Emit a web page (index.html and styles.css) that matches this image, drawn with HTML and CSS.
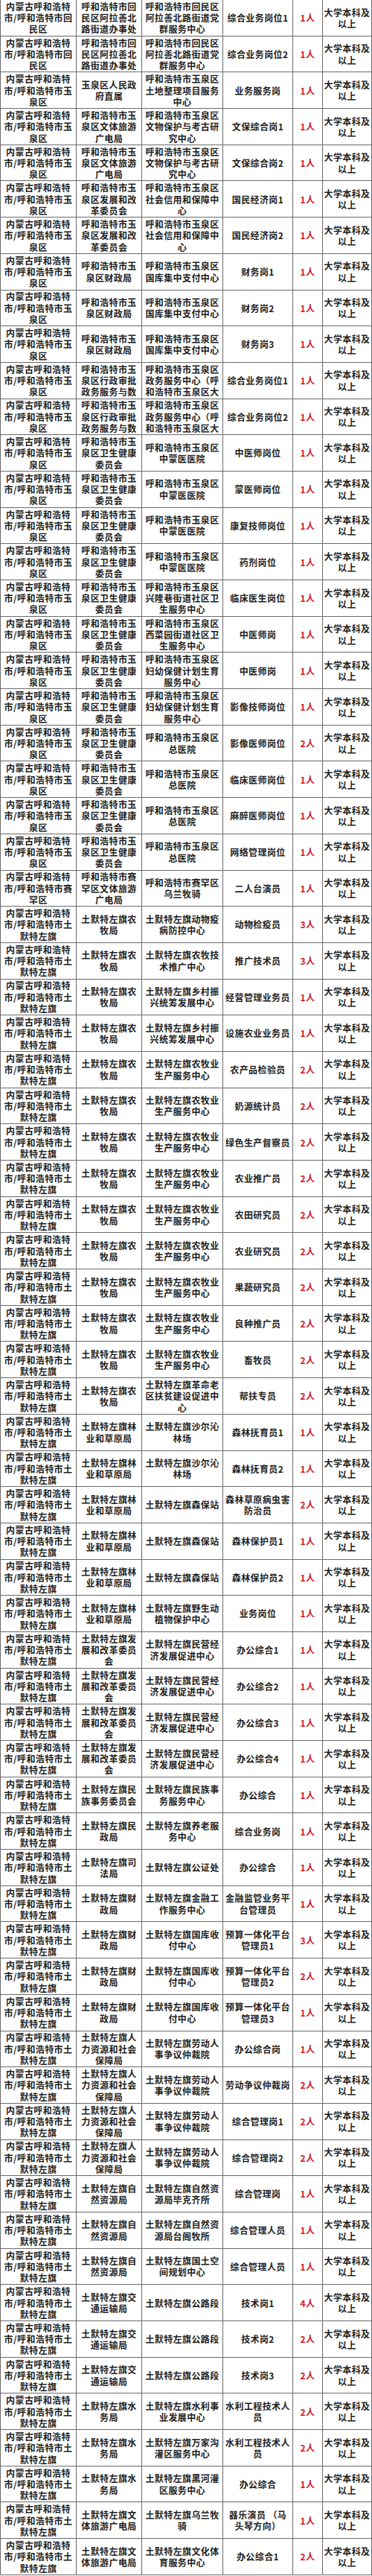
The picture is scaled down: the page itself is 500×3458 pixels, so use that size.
FILE: index.html
```html
<!DOCTYPE html>
<html lang="zh-CN">
<head>
<meta charset="utf-8">
<title>岗位表</title>
<link rel="stylesheet" href="styles.css">
</head>
<body>
<div class="sheet">
<div class="row"><div class="cell"><span>内蒙古呼和浩特市/呼和浩特市回民区</span></div><div class="cell"><span>呼和浩特市回民区阿拉善北路街道办事处</span></div><div class="cell"><span>呼和浩特市回民区阿拉善北路街道党群服务中心</span></div><div class="cell"><span>综合业务岗位1</span></div><div class="cell num"><span>1人</span></div><div class="cell"><span>大学本科及以上</span></div></div>
<div class="row"><div class="cell"><span>内蒙古呼和浩特市/呼和浩特市回民区</span></div><div class="cell"><span>呼和浩特市回民区阿拉善北路街道办事处</span></div><div class="cell"><span>呼和浩特市回民区阿拉善北路街道党群服务中心</span></div><div class="cell"><span>综合业务岗位2</span></div><div class="cell num"><span>1人</span></div><div class="cell"><span>大学本科及以上</span></div></div>
<div class="row"><div class="cell"><span>内蒙古呼和浩特市/呼和浩特市玉泉区</span></div><div class="cell"><span>玉泉区人民政府直属</span></div><div class="cell"><span>呼和浩特市玉泉区土地整理项目服务中心</span></div><div class="cell"><span>业务服务岗</span></div><div class="cell num"><span>1人</span></div><div class="cell"><span>大学本科及以上</span></div></div>
<div class="row"><div class="cell"><span>内蒙古呼和浩特市/呼和浩特市玉泉区</span></div><div class="cell"><span>呼和浩特市玉泉区文体旅游广电局</span></div><div class="cell"><span>呼和浩特市玉泉区文物保护与考古研究中心</span></div><div class="cell"><span>文保综合岗1</span></div><div class="cell num"><span>1人</span></div><div class="cell"><span>大学本科及以上</span></div></div>
<div class="row"><div class="cell"><span>内蒙古呼和浩特市/呼和浩特市玉泉区</span></div><div class="cell"><span>呼和浩特市玉泉区文体旅游广电局</span></div><div class="cell"><span>呼和浩特市玉泉区文物保护与考古研究中心</span></div><div class="cell"><span>文保综合岗2</span></div><div class="cell num"><span>1人</span></div><div class="cell"><span>大学本科及以上</span></div></div>
<div class="row"><div class="cell"><span>内蒙古呼和浩特市/呼和浩特市玉泉区</span></div><div class="cell"><span>呼和浩特市玉泉区发展和改革委员会</span></div><div class="cell"><span>呼和浩特市玉泉区社会信用和保障中心</span></div><div class="cell"><span>国民经济岗1</span></div><div class="cell num"><span>1人</span></div><div class="cell"><span>大学本科及以上</span></div></div>
<div class="row"><div class="cell"><span>内蒙古呼和浩特市/呼和浩特市玉泉区</span></div><div class="cell"><span>呼和浩特市玉泉区发展和改革委员会</span></div><div class="cell"><span>呼和浩特市玉泉区社会信用和保障中心</span></div><div class="cell"><span>国民经济岗2</span></div><div class="cell num"><span>1人</span></div><div class="cell"><span>大学本科及以上</span></div></div>
<div class="row"><div class="cell"><span>内蒙古呼和浩特市/呼和浩特市玉泉区</span></div><div class="cell"><span>呼和浩特市玉泉区财政局</span></div><div class="cell"><span>呼和浩特市玉泉区国库集中支付中心</span></div><div class="cell"><span>财务岗1</span></div><div class="cell num"><span>1人</span></div><div class="cell"><span>大学本科及以上</span></div></div>
<div class="row"><div class="cell"><span>内蒙古呼和浩特市/呼和浩特市玉泉区</span></div><div class="cell"><span>呼和浩特市玉泉区财政局</span></div><div class="cell"><span>呼和浩特市玉泉区国库集中支付中心</span></div><div class="cell"><span>财务岗2</span></div><div class="cell num"><span>1人</span></div><div class="cell"><span>大学本科及以上</span></div></div>
<div class="row"><div class="cell"><span>内蒙古呼和浩特市/呼和浩特市玉泉区</span></div><div class="cell"><span>呼和浩特市玉泉区财政局</span></div><div class="cell"><span>呼和浩特市玉泉区国库集中支付中心</span></div><div class="cell"><span>财务岗3</span></div><div class="cell num"><span>1人</span></div><div class="cell"><span>大学本科及以上</span></div></div>
<div class="row"><div class="cell"><span>内蒙古呼和浩特市/呼和浩特市玉泉区</span></div><div class="cell"><span>呼和浩特市玉泉区行政审批政务服务与数</span></div><div class="cell"><span>呼和浩特市玉泉区政务服务中心（呼和浩特市玉泉区大</span></div><div class="cell"><span>综合业务岗位1</span></div><div class="cell num"><span>1人</span></div><div class="cell"><span>大学本科及以上</span></div></div>
<div class="row"><div class="cell"><span>内蒙古呼和浩特市/呼和浩特市玉泉区</span></div><div class="cell"><span>呼和浩特市玉泉区行政审批政务服务与数</span></div><div class="cell"><span>呼和浩特市玉泉区政务服务中心（呼和浩特市玉泉区大</span></div><div class="cell"><span>综合业务岗位2</span></div><div class="cell num"><span>1人</span></div><div class="cell"><span>大学本科及以上</span></div></div>
<div class="row"><div class="cell"><span>内蒙古呼和浩特市/呼和浩特市玉泉区</span></div><div class="cell"><span>呼和浩特市玉泉区卫生健康委员会</span></div><div class="cell"><span>呼和浩特市玉泉区中蒙医医院</span></div><div class="cell"><span>中医师岗位</span></div><div class="cell num"><span>1人</span></div><div class="cell"><span>大学本科及以上</span></div></div>
<div class="row"><div class="cell"><span>内蒙古呼和浩特市/呼和浩特市玉泉区</span></div><div class="cell"><span>呼和浩特市玉泉区卫生健康委员会</span></div><div class="cell"><span>呼和浩特市玉泉区中蒙医医院</span></div><div class="cell"><span>蒙医师岗位</span></div><div class="cell num"><span>1人</span></div><div class="cell"><span>大学本科及以上</span></div></div>
<div class="row"><div class="cell"><span>内蒙古呼和浩特市/呼和浩特市玉泉区</span></div><div class="cell"><span>呼和浩特市玉泉区卫生健康委员会</span></div><div class="cell"><span>呼和浩特市玉泉区中蒙医医院</span></div><div class="cell"><span>康复技师岗位</span></div><div class="cell num"><span>1人</span></div><div class="cell"><span>大学本科及以上</span></div></div>
<div class="row"><div class="cell"><span>内蒙古呼和浩特市/呼和浩特市玉泉区</span></div><div class="cell"><span>呼和浩特市玉泉区卫生健康委员会</span></div><div class="cell"><span>呼和浩特市玉泉区中蒙医医院</span></div><div class="cell"><span>药剂岗位</span></div><div class="cell num"><span>1人</span></div><div class="cell"><span>大学本科及以上</span></div></div>
<div class="row"><div class="cell"><span>内蒙古呼和浩特市/呼和浩特市玉泉区</span></div><div class="cell"><span>呼和浩特市玉泉区卫生健康委员会</span></div><div class="cell"><span>呼和浩特市玉泉区兴隆巷街道社区卫生服务中心</span></div><div class="cell"><span>临床医生岗位</span></div><div class="cell num"><span>1人</span></div><div class="cell"><span>大学本科及以上</span></div></div>
<div class="row"><div class="cell"><span>内蒙古呼和浩特市/呼和浩特市玉泉区</span></div><div class="cell"><span>呼和浩特市玉泉区卫生健康委员会</span></div><div class="cell"><span>呼和浩特市玉泉区西菜园街道社区卫生服务中心</span></div><div class="cell"><span>中医师岗</span></div><div class="cell num"><span>1人</span></div><div class="cell"><span>大学本科及以上</span></div></div>
<div class="row"><div class="cell"><span>内蒙古呼和浩特市/呼和浩特市玉泉区</span></div><div class="cell"><span>呼和浩特市玉泉区卫生健康委员会</span></div><div class="cell"><span>呼和浩特市玉泉区妇幼保健计划生育服务中心</span></div><div class="cell"><span>中医师岗</span></div><div class="cell num"><span>1人</span></div><div class="cell"><span>大学本科及以上</span></div></div>
<div class="row"><div class="cell"><span>内蒙古呼和浩特市/呼和浩特市玉泉区</span></div><div class="cell"><span>呼和浩特市玉泉区卫生健康委员会</span></div><div class="cell"><span>呼和浩特市玉泉区妇幼保健计划生育服务中心</span></div><div class="cell"><span>影像技师岗位</span></div><div class="cell num"><span>1人</span></div><div class="cell"><span>大学本科及以上</span></div></div>
<div class="row"><div class="cell"><span>内蒙古呼和浩特市/呼和浩特市玉泉区</span></div><div class="cell"><span>呼和浩特市玉泉区卫生健康委员会</span></div><div class="cell"><span>呼和浩特市玉泉区总医院</span></div><div class="cell"><span>影像医师岗位</span></div><div class="cell num"><span>2人</span></div><div class="cell"><span>大学本科及以上</span></div></div>
<div class="row"><div class="cell"><span>内蒙古呼和浩特市/呼和浩特市玉泉区</span></div><div class="cell"><span>呼和浩特市玉泉区卫生健康委员会</span></div><div class="cell"><span>呼和浩特市玉泉区总医院</span></div><div class="cell"><span>临床医师岗位</span></div><div class="cell num"><span>1人</span></div><div class="cell"><span>大学本科及以上</span></div></div>
<div class="row"><div class="cell"><span>内蒙古呼和浩特市/呼和浩特市玉泉区</span></div><div class="cell"><span>呼和浩特市玉泉区卫生健康委员会</span></div><div class="cell"><span>呼和浩特市玉泉区总医院</span></div><div class="cell"><span>麻醉医师岗位</span></div><div class="cell num"><span>1人</span></div><div class="cell"><span>大学本科及以上</span></div></div>
<div class="row"><div class="cell"><span>内蒙古呼和浩特市/呼和浩特市玉泉区</span></div><div class="cell"><span>呼和浩特市玉泉区卫生健康委员会</span></div><div class="cell"><span>呼和浩特市玉泉区总医院</span></div><div class="cell"><span>网络管理岗位</span></div><div class="cell num"><span>1人</span></div><div class="cell"><span>大学本科及以上</span></div></div>
<div class="row"><div class="cell"><span>内蒙古呼和浩特市/呼和浩特市赛罕区</span></div><div class="cell"><span>呼和浩特市赛罕区文体旅游广电局</span></div><div class="cell"><span>呼和浩特市赛罕区乌兰牧骑</span></div><div class="cell"><span>二人台演员</span></div><div class="cell num"><span>1人</span></div><div class="cell"><span>大学本科及以上</span></div></div>
<div class="row"><div class="cell"><span>内蒙古呼和浩特市/呼和浩特市土默特左旗</span></div><div class="cell"><span>土默特左旗农牧局</span></div><div class="cell"><span>土默特左旗动物疫病防控中心</span></div><div class="cell"><span>动物检疫员</span></div><div class="cell num"><span>3人</span></div><div class="cell"><span>大学本科及以上</span></div></div>
<div class="row"><div class="cell"><span>内蒙古呼和浩特市/呼和浩特市土默特左旗</span></div><div class="cell"><span>土默特左旗农牧局</span></div><div class="cell"><span>土默特左旗农牧技术推广中心</span></div><div class="cell"><span>推广技术员</span></div><div class="cell num"><span>3人</span></div><div class="cell"><span>大学本科及以上</span></div></div>
<div class="row"><div class="cell"><span>内蒙古呼和浩特市/呼和浩特市土默特左旗</span></div><div class="cell"><span>土默特左旗农牧局</span></div><div class="cell"><span>土默特左旗乡村振兴统筹发展中心</span></div><div class="cell"><span>经营管理业务员</span></div><div class="cell num"><span>1人</span></div><div class="cell"><span>大学本科及以上</span></div></div>
<div class="row"><div class="cell"><span>内蒙古呼和浩特市/呼和浩特市土默特左旗</span></div><div class="cell"><span>土默特左旗农牧局</span></div><div class="cell"><span>土默特左旗乡村振兴统筹发展中心</span></div><div class="cell"><span>设施农业业务员</span></div><div class="cell num"><span>1人</span></div><div class="cell"><span>大学本科及以上</span></div></div>
<div class="row"><div class="cell"><span>内蒙古呼和浩特市/呼和浩特市土默特左旗</span></div><div class="cell"><span>土默特左旗农牧局</span></div><div class="cell"><span>土默特左旗农牧业生产服务中心</span></div><div class="cell"><span>农产品检验员</span></div><div class="cell num"><span>2人</span></div><div class="cell"><span>大学本科及以上</span></div></div>
<div class="row"><div class="cell"><span>内蒙古呼和浩特市/呼和浩特市土默特左旗</span></div><div class="cell"><span>土默特左旗农牧局</span></div><div class="cell"><span>土默特左旗农牧业生产服务中心</span></div><div class="cell"><span>奶源统计员</span></div><div class="cell num"><span>2人</span></div><div class="cell"><span>大学本科及以上</span></div></div>
<div class="row"><div class="cell"><span>内蒙古呼和浩特市/呼和浩特市土默特左旗</span></div><div class="cell"><span>土默特左旗农牧局</span></div><div class="cell"><span>土默特左旗农牧业生产服务中心</span></div><div class="cell"><span>绿色生产督察员</span></div><div class="cell num"><span>2人</span></div><div class="cell"><span>大学本科及以上</span></div></div>
<div class="row"><div class="cell"><span>内蒙古呼和浩特市/呼和浩特市土默特左旗</span></div><div class="cell"><span>土默特左旗农牧局</span></div><div class="cell"><span>土默特左旗农牧业生产服务中心</span></div><div class="cell"><span>农业推广员</span></div><div class="cell num"><span>2人</span></div><div class="cell"><span>大学本科及以上</span></div></div>
<div class="row"><div class="cell"><span>内蒙古呼和浩特市/呼和浩特市土默特左旗</span></div><div class="cell"><span>土默特左旗农牧局</span></div><div class="cell"><span>土默特左旗农牧业生产服务中心</span></div><div class="cell"><span>农田研究员</span></div><div class="cell num"><span>2人</span></div><div class="cell"><span>大学本科及以上</span></div></div>
<div class="row"><div class="cell"><span>内蒙古呼和浩特市/呼和浩特市土默特左旗</span></div><div class="cell"><span>土默特左旗农牧局</span></div><div class="cell"><span>土默特左旗农牧业生产服务中心</span></div><div class="cell"><span>农业研究员</span></div><div class="cell num"><span>2人</span></div><div class="cell"><span>大学本科及以上</span></div></div>
<div class="row"><div class="cell"><span>内蒙古呼和浩特市/呼和浩特市土默特左旗</span></div><div class="cell"><span>土默特左旗农牧局</span></div><div class="cell"><span>土默特左旗农牧业生产服务中心</span></div><div class="cell"><span>果蔬研究员</span></div><div class="cell num"><span>2人</span></div><div class="cell"><span>大学本科及以上</span></div></div>
<div class="row"><div class="cell"><span>内蒙古呼和浩特市/呼和浩特市土默特左旗</span></div><div class="cell"><span>土默特左旗农牧局</span></div><div class="cell"><span>土默特左旗农牧业生产服务中心</span></div><div class="cell"><span>良种推广员</span></div><div class="cell num"><span>2人</span></div><div class="cell"><span>大学本科及以上</span></div></div>
<div class="row"><div class="cell"><span>内蒙古呼和浩特市/呼和浩特市土默特左旗</span></div><div class="cell"><span>土默特左旗农牧局</span></div><div class="cell"><span>土默特左旗农牧业生产服务中心</span></div><div class="cell"><span>畜牧员</span></div><div class="cell num"><span>2人</span></div><div class="cell"><span>大学本科及以上</span></div></div>
<div class="row"><div class="cell"><span>内蒙古呼和浩特市/呼和浩特市土默特左旗</span></div><div class="cell"><span>土默特左旗农牧局</span></div><div class="cell"><span>土默特左旗革命老区扶贫建设促进中心</span></div><div class="cell"><span>帮扶专员</span></div><div class="cell num"><span>2人</span></div><div class="cell"><span>大学本科及以上</span></div></div>
<div class="row"><div class="cell"><span>内蒙古呼和浩特市/呼和浩特市土默特左旗</span></div><div class="cell"><span>土默特左旗林业和草原局</span></div><div class="cell"><span>土默特左旗沙尔沁林场</span></div><div class="cell"><span>森林抚育员1</span></div><div class="cell num"><span>1人</span></div><div class="cell"><span>大学本科及以上</span></div></div>
<div class="row"><div class="cell"><span>内蒙古呼和浩特市/呼和浩特市土默特左旗</span></div><div class="cell"><span>土默特左旗林业和草原局</span></div><div class="cell"><span>土默特左旗沙尔沁林场</span></div><div class="cell"><span>森林抚育员2</span></div><div class="cell num"><span>1人</span></div><div class="cell"><span>大学本科及以上</span></div></div>
<div class="row"><div class="cell"><span>内蒙古呼和浩特市/呼和浩特市土默特左旗</span></div><div class="cell"><span>土默特左旗林业和草原局</span></div><div class="cell"><span>土默特左旗森保站</span></div><div class="cell"><span>森林草原病虫害防治员</span></div><div class="cell num"><span>2人</span></div><div class="cell"><span>大学本科及以上</span></div></div>
<div class="row"><div class="cell"><span>内蒙古呼和浩特市/呼和浩特市土默特左旗</span></div><div class="cell"><span>土默特左旗林业和草原局</span></div><div class="cell"><span>土默特左旗森保站</span></div><div class="cell"><span>森林保护员1</span></div><div class="cell num"><span>1人</span></div><div class="cell"><span>大学本科及以上</span></div></div>
<div class="row"><div class="cell"><span>内蒙古呼和浩特市/呼和浩特市土默特左旗</span></div><div class="cell"><span>土默特左旗林业和草原局</span></div><div class="cell"><span>土默特左旗森保站</span></div><div class="cell"><span>森林保护员2</span></div><div class="cell num"><span>1人</span></div><div class="cell"><span>大学本科及以上</span></div></div>
<div class="row"><div class="cell"><span>内蒙古呼和浩特市/呼和浩特市土默特左旗</span></div><div class="cell"><span>土默特左旗林业和草原局</span></div><div class="cell"><span>土默特左旗野生动植物保护中心</span></div><div class="cell"><span>业务岗位</span></div><div class="cell num"><span>1人</span></div><div class="cell"><span>大学本科及以上</span></div></div>
<div class="row"><div class="cell"><span>内蒙古呼和浩特市/呼和浩特市土默特左旗</span></div><div class="cell"><span>土默特左旗发展和改革委员会</span></div><div class="cell"><span>土默特左旗民营经济发展促进中心</span></div><div class="cell"><span>办公综合1</span></div><div class="cell num"><span>1人</span></div><div class="cell"><span>大学本科及以上</span></div></div>
<div class="row"><div class="cell"><span>内蒙古呼和浩特市/呼和浩特市土默特左旗</span></div><div class="cell"><span>土默特左旗发展和改革委员会</span></div><div class="cell"><span>土默特左旗民营经济发展促进中心</span></div><div class="cell"><span>办公综合2</span></div><div class="cell num"><span>1人</span></div><div class="cell"><span>大学本科及以上</span></div></div>
<div class="row"><div class="cell"><span>内蒙古呼和浩特市/呼和浩特市土默特左旗</span></div><div class="cell"><span>土默特左旗发展和改革委员会</span></div><div class="cell"><span>土默特左旗民营经济发展促进中心</span></div><div class="cell"><span>办公综合3</span></div><div class="cell num"><span>1人</span></div><div class="cell"><span>大学本科及以上</span></div></div>
<div class="row"><div class="cell"><span>内蒙古呼和浩特市/呼和浩特市土默特左旗</span></div><div class="cell"><span>土默特左旗发展和改革委员会</span></div><div class="cell"><span>土默特左旗民营经济发展促进中心</span></div><div class="cell"><span>办公综合4</span></div><div class="cell num"><span>1人</span></div><div class="cell"><span>大学本科及以上</span></div></div>
<div class="row"><div class="cell"><span>内蒙古呼和浩特市/呼和浩特市土默特左旗</span></div><div class="cell"><span>土默特左旗民族事务委员会</span></div><div class="cell"><span>土默特左旗民族事务服务中心</span></div><div class="cell"><span>办公综合</span></div><div class="cell num"><span>1人</span></div><div class="cell"><span>大学本科及以上</span></div></div>
<div class="row"><div class="cell"><span>内蒙古呼和浩特市/呼和浩特市土默特左旗</span></div><div class="cell"><span>土默特左旗民政局</span></div><div class="cell"><span>土默特左旗养老服务中心</span></div><div class="cell"><span>综合业务岗</span></div><div class="cell num"><span>1人</span></div><div class="cell"><span>大学本科及以上</span></div></div>
<div class="row"><div class="cell"><span>内蒙古呼和浩特市/呼和浩特市土默特左旗</span></div><div class="cell"><span>土默特左旗司法局</span></div><div class="cell"><span>土默特左旗公证处</span></div><div class="cell"><span>办公综合</span></div><div class="cell num"><span>1人</span></div><div class="cell"><span>大学本科及以上</span></div></div>
<div class="row"><div class="cell"><span>内蒙古呼和浩特市/呼和浩特市土默特左旗</span></div><div class="cell"><span>土默特左旗财政局</span></div><div class="cell"><span>土默特左旗金融工作服务中心</span></div><div class="cell"><span>金融监管业务平台管理员</span></div><div class="cell num"><span>1人</span></div><div class="cell"><span>大学本科及以上</span></div></div>
<div class="row"><div class="cell"><span>内蒙古呼和浩特市/呼和浩特市土默特左旗</span></div><div class="cell"><span>土默特左旗财政局</span></div><div class="cell"><span>土默特左旗国库收付中心</span></div><div class="cell"><span>预算一体化平台管理员1</span></div><div class="cell num"><span>3人</span></div><div class="cell"><span>大学本科及以上</span></div></div>
<div class="row"><div class="cell"><span>内蒙古呼和浩特市/呼和浩特市土默特左旗</span></div><div class="cell"><span>土默特左旗财政局</span></div><div class="cell"><span>土默特左旗国库收付中心</span></div><div class="cell"><span>预算一体化平台管理员2</span></div><div class="cell num"><span>2人</span></div><div class="cell"><span>大学本科及以上</span></div></div>
<div class="row"><div class="cell"><span>内蒙古呼和浩特市/呼和浩特市土默特左旗</span></div><div class="cell"><span>土默特左旗财政局</span></div><div class="cell"><span>土默特左旗国库收付中心</span></div><div class="cell"><span>预算一体化平台管理员3</span></div><div class="cell num"><span>1人</span></div><div class="cell"><span>大学本科及以上</span></div></div>
<div class="row"><div class="cell"><span>内蒙古呼和浩特市/呼和浩特市土默特左旗</span></div><div class="cell"><span>土默特左旗人力资源和社会保障局</span></div><div class="cell"><span>土默特左旗劳动人事争议仲裁院</span></div><div class="cell"><span>办公综合岗</span></div><div class="cell num"><span>1人</span></div><div class="cell"><span>大学本科及以上</span></div></div>
<div class="row"><div class="cell"><span>内蒙古呼和浩特市/呼和浩特市土默特左旗</span></div><div class="cell"><span>土默特左旗人力资源和社会保障局</span></div><div class="cell"><span>土默特左旗劳动人事争议仲裁院</span></div><div class="cell"><span>劳动争议仲裁岗</span></div><div class="cell num"><span>2人</span></div><div class="cell"><span>大学本科及以上</span></div></div>
<div class="row"><div class="cell"><span>内蒙古呼和浩特市/呼和浩特市土默特左旗</span></div><div class="cell"><span>土默特左旗人力资源和社会保障局</span></div><div class="cell"><span>土默特左旗劳动人事争议仲裁院</span></div><div class="cell"><span>综合管理岗1</span></div><div class="cell num"><span>2人</span></div><div class="cell"><span>大学本科及以上</span></div></div>
<div class="row"><div class="cell"><span>内蒙古呼和浩特市/呼和浩特市土默特左旗</span></div><div class="cell"><span>土默特左旗人力资源和社会保障局</span></div><div class="cell"><span>土默特左旗劳动人事争议仲裁院</span></div><div class="cell"><span>综合管理岗2</span></div><div class="cell num"><span>2人</span></div><div class="cell"><span>大学本科及以上</span></div></div>
<div class="row"><div class="cell"><span>内蒙古呼和浩特市/呼和浩特市土默特左旗</span></div><div class="cell"><span>土默特左旗自然资源局</span></div><div class="cell"><span>土默特左旗自然资源局毕克齐所</span></div><div class="cell"><span>综合管理岗</span></div><div class="cell num"><span>1人</span></div><div class="cell"><span>大学本科及以上</span></div></div>
<div class="row"><div class="cell"><span>内蒙古呼和浩特市/呼和浩特市土默特左旗</span></div><div class="cell"><span>土默特左旗自然资源局</span></div><div class="cell"><span>土默特左旗自然资源局台阁牧所</span></div><div class="cell"><span>综合管理人员</span></div><div class="cell num"><span>1人</span></div><div class="cell"><span>大学本科及以上</span></div></div>
<div class="row"><div class="cell"><span>内蒙古呼和浩特市/呼和浩特市土默特左旗</span></div><div class="cell"><span>土默特左旗自然资源局</span></div><div class="cell"><span>土默特左旗国土空间规划中心</span></div><div class="cell"><span>综合管理人员</span></div><div class="cell num"><span>1人</span></div><div class="cell"><span>大学本科及以上</span></div></div>
<div class="row"><div class="cell"><span>内蒙古呼和浩特市/呼和浩特市土默特左旗</span></div><div class="cell"><span>土默特左旗交通运输局</span></div><div class="cell"><span>土默特左旗公路段</span></div><div class="cell"><span>技术岗1</span></div><div class="cell num"><span>4人</span></div><div class="cell"><span>大学本科及以上</span></div></div>
<div class="row"><div class="cell"><span>内蒙古呼和浩特市/呼和浩特市土默特左旗</span></div><div class="cell"><span>土默特左旗交通运输局</span></div><div class="cell"><span>土默特左旗公路段</span></div><div class="cell"><span>技术岗2</span></div><div class="cell num"><span>2人</span></div><div class="cell"><span>大学本科及以上</span></div></div>
<div class="row"><div class="cell"><span>内蒙古呼和浩特市/呼和浩特市土默特左旗</span></div><div class="cell"><span>土默特左旗交通运输局</span></div><div class="cell"><span>土默特左旗公路段</span></div><div class="cell"><span>技术岗3</span></div><div class="cell num"><span>2人</span></div><div class="cell"><span>大学本科及以上</span></div></div>
<div class="row"><div class="cell"><span>内蒙古呼和浩特市/呼和浩特市土默特左旗</span></div><div class="cell"><span>土默特左旗水务局</span></div><div class="cell"><span>土默特左旗水利事业发展中心</span></div><div class="cell"><span>水利工程技术人员</span></div><div class="cell num"><span>2人</span></div><div class="cell"><span>大学本科及以上</span></div></div>
<div class="row"><div class="cell"><span>内蒙古呼和浩特市/呼和浩特市土默特左旗</span></div><div class="cell"><span>土默特左旗水务局</span></div><div class="cell"><span>土默特左旗万家沟灌区服务中心</span></div><div class="cell"><span>水利工程技术人员</span></div><div class="cell num"><span>2人</span></div><div class="cell"><span>大学本科及以上</span></div></div>
<div class="row"><div class="cell"><span>内蒙古呼和浩特市/呼和浩特市土默特左旗</span></div><div class="cell"><span>土默特左旗水务局</span></div><div class="cell"><span>土默特左旗黑河灌区服务中心</span></div><div class="cell"><span>办公综合</span></div><div class="cell num"><span>1人</span></div><div class="cell"><span>大学本科及以上</span></div></div>
<div class="row"><div class="cell"><span>内蒙古呼和浩特市/呼和浩特市土默特左旗</span></div><div class="cell"><span>土默特左旗文体旅游广电局</span></div><div class="cell"><span>土默特左旗乌兰牧骑</span></div><div class="cell"><span>器乐演员 （马头琴方向）</span></div><div class="cell num"><span>1人</span></div><div class="cell"><span>大学本科及以上</span></div></div>
<div class="row"><div class="cell"><span>内蒙古呼和浩特市/呼和浩特市土默特左旗</span></div><div class="cell"><span>土默特左旗文体旅游广电局</span></div><div class="cell"><span>土默特左旗文化体育服务中心</span></div><div class="cell"><span>办公综合1</span></div><div class="cell num"><span>2人</span></div><div class="cell"><span>大学本科及以上</span></div></div>
</div>
</body>
</html>
```
FILE: styles.css
```css
html, body {
  margin: 0;
  padding: 0;
  background: #ffffff;
}

.sheet {
  width: 500px;
  box-sizing: border-box;
  border-left: 1px solid #6a6a6a;
  font-family: "Noto Sans CJK SC", "Noto Sans", sans-serif;
  font-weight: 700;
  font-size: 12px;
  letter-spacing: 0.4px;
  line-height: 15.3px;
  color: #1e1e1e;
}

.row {
  display: grid;
  grid-template-columns: 102px 88px 109px 94px 40px 66px;
  height: 48.7px;
  box-sizing: border-box;
  border-bottom: 1px solid #6a6a6a;
}

.cell {
  display: flex;
  align-items: center;
  justify-content: center;
  box-sizing: border-box;
  border-right: 1px solid #6a6a6a;
  padding: 0 2px;
  overflow: hidden;
  text-align: center;
}

.cell span {
  display: block;
}

.cell:nth-child(2) { padding: 0 4px; }
.cell:nth-child(3) { padding: 0 3px; }
.cell:nth-child(4) { padding: 0 2px; }
.cell:nth-child(5),
.cell:nth-child(6) { padding: 0; }

.num {
  color: #d3162a;
}
```
